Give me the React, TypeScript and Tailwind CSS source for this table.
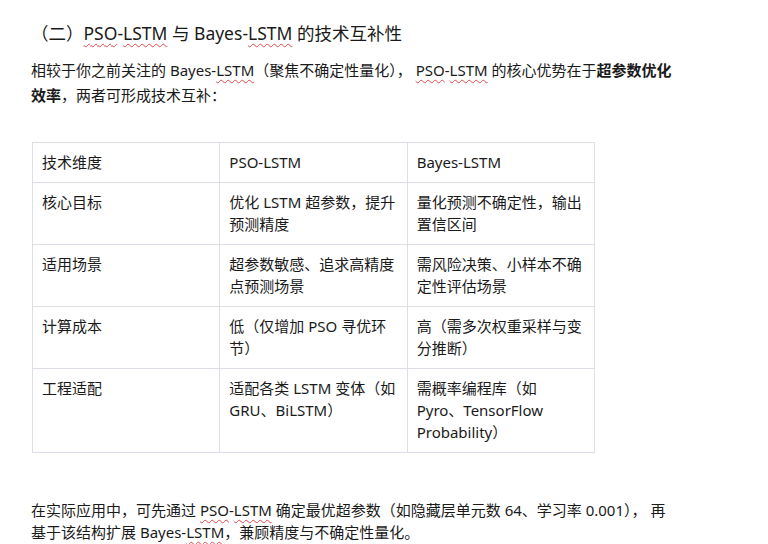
const Wavy = ({ children }: { children: React.ReactNode }) => (
  <span className="underline decoration-wavy decoration-[#e5484d] decoration-1 underline-offset-[3px]">
    {children}
  </span>
)

const rows: { dim: string; pso: React.ReactNode; bayes: React.ReactNode }[] = [
  { dim: "核心目标", pso: "优化 LSTM 超参数，提升预测精度", bayes: "量化预测不确定性，输出置信区间" },
  { dim: "适用场景", pso: "超参数敏感、追求高精度点预测场景", bayes: "需风险决策、小样本不确定性评估场景" },
  { dim: "计算成本", pso: "低（仅增加 PSO 寻优环节）", bayes: "高（需多次权重采样与变分推断）" },
  {
    dim: "工程适配",
    pso: "适配各类 LSTM 变体（如 GRU、BiLSTM）",
    bayes: (
      <>
        需概率编程库（如
        <br />
        Pyro、TensorFlow Probability）
      </>
    ),
  },
]

export default function App() {
  const cell = "border border-[#dcdfe5] px-[9px] pt-[8px] pb-[9px] align-top text-left font-normal leading-[22px]"
  return (
    <div
      className="min-h-[544px] w-[768px] bg-white pl-[31px] pt-[20px] text-[#1a1a1a]"
      style={{ fontFamily: '"Noto Sans", "Noto Sans CJK SC", sans-serif' }}
    >
      {/* 标题 */}
      <h2 className="text-[17.5px] leading-[26px]">
        （二）<Wavy>PSO</Wavy>-<Wavy>LSTM</Wavy> 与 Bayes-<Wavy>LSTM</Wavy> 的技术互补性
      </h2>

      <p className="mt-[12px] w-[648px] text-[15px] leading-[25px]">
        相较于你之前关注的 Bayes-<Wavy>LSTM</Wavy>（聚焦不确定性量化）， <Wavy>PSO</Wavy>-<Wavy>LSTM</Wavy>{" "}
        的核心优势在于<b className="font-bold">超参数优化效率</b>，两者可形成技术互补：
      </p>

      {/* 对比表 */}
      <table className="ml-px mt-[34px] w-[563px] table-fixed border-collapse text-[15px]">
        <thead>
          <tr>
            <th className={cell}>技术维度</th>
            <th className={cell}>PSO-LSTM</th>
            <th className={cell}>Bayes-LSTM</th>
          </tr>
        </thead>
        <tbody>
          {rows.map((r) => (
            <tr key={r.dim}>
              <td className={cell}>{r.dim}</td>
              <td className={cell}>{r.pso}</td>
              <td className={cell}>{r.bayes}</td>
            </tr>
          ))}
        </tbody>
      </table>

      <p className="mt-[46px] w-[648px] text-[15px] leading-[22px]">
        在实际应用中，可先通过 <Wavy>PSO</Wavy>-<Wavy>LSTM</Wavy> 确定最优超参数（如隐藏层单元数 64、学习率 0.001）， 再基于该结构扩展 Bayes-
        <Wavy>LSTM</Wavy>，兼顾精度与不确定性量化。
      </p>
    </div>
  )
}
